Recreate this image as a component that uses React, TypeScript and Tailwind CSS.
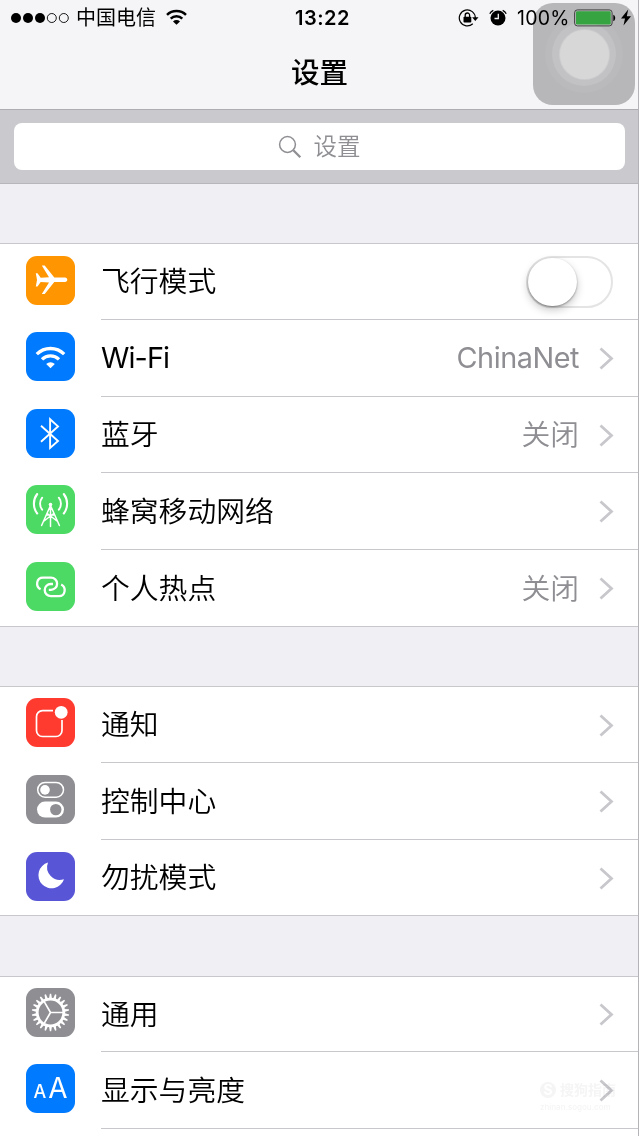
import type { ReactNode } from "react";

const cjk = "font-['Inter','Noto_Sans_CJK_SC',sans-serif]";

function Tile({ color, children }: { color: string; children: ReactNode }) {
  return (
    <div className={`h-[49px] w-[49px] shrink-0 overflow-hidden rounded-[11px] ${color}`}>
      <svg viewBox="0 0 49 49" className="block h-full w-full" fill="none">
        {children}
      </svg>
    </div>
  );
}

function Airplane() {
  return (
    <Tile color="bg-[#ff9500]">
      <path
        fill="#fff"
        d="M9.800 17.200h1.700l3.200 4.600 8.300-.6L15.800 9.600h2.900l9.600 12h10.700c1.500.1 2.300 1.200 2.300 2.200s-.8 2.100-2.300 2.200H28.300l-9.600 12h-2.900L23 26.500l-8.300-.6-3.200 4.600H9.800l1.200-6.600z"
      />
    </Tile>
  );
}

function Wifi() {
  return (
    <Tile color="bg-[#007aff]">
      <g stroke="#fff" strokeWidth="3.300">
        <path d="M10.800 22.200a19.300 19.300 0 0 1 27.400 0" />
        <path d="M16 27.400a12 12 0 0 1 17 0" />
      </g>
      <path fill="#fff" d="M24.500 36.300l-4.300-4.300a6.100 6.100 0 0 1 8.600 0z" />
    </Tile>
  );
}

function Bluetooth() {
  return (
    <Tile color="bg-[#007aff]">
      <path d="M15 16.800l17 15.200-7.900 7V10.200l7.900 7.200L15 32.800" stroke="#fff" strokeWidth="1.900" />
    </Tile>
  );
}

function Cellular() {
  return (
    <Tile color="bg-[#4cd964]">
      <g stroke="#fff" strokeWidth="1.500" strokeLinecap="round">
        <path d="M24.500 20.500L15.600 40.500M24.500 20.500l8.900 20M24.500 20v21.500M21.300 28.500l10.300 8M27.700 28.500l-10.300 8M20.500 30h8" />
        <path strokeWidth="1.900" d="M16.200 12.700a9.500 9.500 0 0 0 0 12M32.800 12.700a9.500 9.500 0 0 1 0 12" />
        <path strokeWidth="2.100" d="M11.200 9a16 16 0 0 0 0 19.500M37.800 9a16 16 0 0 1 0 19.500" />
      </g>
      <circle cx="24.500" cy="19.500" r="1.800" fill="#fff" />
    </Tile>
  );
}

function Hotspot() {
  return (
    <Tile color="bg-[#4cd964]">
      <g stroke="#fff" strokeWidth="2.300">
        <path d="M14.600 27.300C9.300 24.600 10.100 15.600 17 15.600H25a6.100 6.100 0 0 1 0 12.200H22.800" />
        <path d="M35.200 22.500C40.500 25.200 39.700 34.200 32.800 34.200H24.800a6.100 6.100 0 0 1 0-12.200h2.200" />
      </g>
    </Tile>
  );
}

function Notifications() {
  return (
    <Tile color="bg-[#ff3b30]">
      <path
        d="M27 12.700H16.500a6 6 0 0 0-6 6V32.500a6 6 0 0 0 6 6H30a6 6 0 0 0 6-6V22"
        stroke="#fff"
        strokeWidth="1.700"
      />
      <circle cx="35.200" cy="14.300" r="6.400" fill="#fff" />
    </Tile>
  );
}

function ControlCenter() {
  return (
    <Tile color="bg-[#8e8e93]">
      <rect x="11.700" y="7.500" width="25.800" height="14.700" rx="7.350" stroke="#fff" strokeWidth="1.500" />
      <circle cx="19" cy="14.900" r="4.800" fill="#fff" />
      <rect x="11" y="26.600" width="27" height="16" rx="8" fill="#fff" />
      <circle cx="29.800" cy="34.600" r="5.700" fill="#8e8e93" />
    </Tile>
  );
}

function Moon() {
  return (
    <Tile color="bg-[#5856d6]">
      <path fill="#fff" d="M22 10.600A13.100 13.100 0 1 0 38 27.200 12.700 12.700 0 0 1 22 10.600z" />
    </Tile>
  );
}

const teeth = Array.from({ length: 22 }, (_, i) => (i * 360) / 22);

function Gear() {
  return (
    <Tile color="bg-[#8e8e93]">
      <circle cx="24.500" cy="24.500" r="13.300" stroke="#fff" strokeWidth="2.800" />
      {teeth.map((a) => (
        <path key={a} d="M23 10.800l.8-5h1.400l.8 5z" fill="#fff" transform={`rotate(${a} 24.5 24.5)`} />
      ))}
      <path d="M24.500 24.500H37M24.500 24.500l-6.300-10.900M24.500 24.500l-6.300 10.900" stroke="#fff" strokeWidth="1.700" />
    </Tile>
  );
}

function Display() {
  return (
    <div className="flex h-[49px] w-[49px] shrink-0 items-baseline justify-center gap-[2px] rounded-[11px] bg-[#007aff] font-['Inter',sans-serif] text-white">
      <span className="text-[18px] leading-[49px] font-medium">A</span>
      <span className="text-[28px] leading-[49px]">A</span>
    </div>
  );
}

function Chevron() {
  return (
    <svg className="h-[24px] w-[15px] shrink-0" viewBox="0 0 15 24" fill="none">
      <path d="M1.500 2.500l11 10-11 10" stroke="#c7c7cc" strokeWidth="2.800" />
    </svg>
  );
}

function Toggle() {
  return (
    <div className="mt-px mr-px flex h-[52px] w-[87px] rounded-full border-[2px] border-[#e4e4e4] bg-white">
      <div className="h-[48px] w-[49px] rounded-full bg-white shadow-[0_4px_9px_rgba(0,0,0,0.22),0_1px_2px_rgba(0,0,0,0.35)]" />
    </div>
  );
}

interface Item {
  label: string;
  icon: ReactNode;
  height: string;
  value?: string;
  toggle?: boolean;
  latin?: boolean;
  raised?: boolean;
}

function Row({ item, last }: { item: Item; last: boolean }) {
  return (
    <div className={`flex pl-[26px] ${item.height}`}>
      <div className={item.raised ? "pt-[11px]" : "pt-[12px]"}>{item.icon}</div>
      <div
        className={`ml-[26px] flex flex-1 items-center pr-[25px] text-[28.800px] leading-[40px] ${
          last ? "" : "border-b border-[#c8c7cc]"
        }`}
      >
        <span
          className={`flex-1 text-black ${item.latin ? "font-[380] tracking-[-0.900px]" : "pt-px font-[350]"}`}
        >
          {item.label}
        </span>
        {item.toggle && <Toggle />}
        {item.value && (
          <span
            className={`text-[#8e8e93] ${
              item.latin ? "mr-[20px] font-[380] tracking-[-0.450px]" : "mr-[20px] pt-px font-[350]"
            }`}
          >
            {item.value}
          </span>
        )}
        {!item.toggle && <Chevron />}
      </div>
    </div>
  );
}

function Group({ items, open = false }: { items: Item[]; open?: boolean }) {
  return (
    <section className="border-y border-[#c8c7cc] bg-white">
      {items.map((item, i) => (
        <Row key={item.label} item={item} last={!open && i === items.length - 1} />
      ))}
      {open && <div className="h-[77px]" />}
    </section>
  );
}

const connectivity: Item[] = [
  { label: "飞行模式", icon: <Airplane />, height: "h-[76px]", toggle: true },
  { label: "Wi-Fi", icon: <Wifi />, height: "h-[77px]", value: "ChinaNet", latin: true },
  { label: "蓝牙", icon: <Bluetooth />, height: "h-[76px]", value: "关闭" },
  { label: "蜂窝移动网络", icon: <Cellular />, height: "h-[77px]" },
  { label: "个人热点", icon: <Hotspot />, height: "h-[76px]", value: "关闭" },
];

const alerts: Item[] = [
  { label: "通知", icon: <Notifications />, height: "h-[76px]", raised: true },
  { label: "控制中心", icon: <ControlCenter />, height: "h-[77px]" },
  { label: "勿扰模式", icon: <Moon />, height: "h-[75px]" },
];

const general: Item[] = [
  { label: "通用", icon: <Gear />, height: "h-[75px]", raised: true },
  { label: "显示与亮度", icon: <Display />, height: "h-[77px]" },
];

function StatusBar() {
  return (
    <div className="relative flex h-[35px] items-center justify-between pr-[8px] pl-[11px] text-black">
      <div className="flex items-center">
        <svg className="h-[12px] w-[58px]" viewBox="0 0 58 12" fill="none">
          <circle cx="5" cy="6" r="5" fill="#000" />
          <circle cx="17" cy="6" r="5" fill="#000" />
          <circle cx="29" cy="6" r="5" fill="#000" />
          <circle cx="40.800" cy="6" r="4.500" stroke="#000" strokeWidth=".9" />
          <circle cx="52.800" cy="6" r="4.500" stroke="#000" strokeWidth=".9" />
        </svg>
        <span className="ml-[7px] text-[20px] leading-[30px]">中国电信</span>
        <svg className="-mt-[2px] ml-[10px] h-[16px] w-[21px]" viewBox="0 0 21 16" fill="none">
          <g stroke="#000" strokeWidth="2.500">
            <path d="M1 5.800a13.700 13.700 0 0 1 19 0" />
            <path d="M4.700 9.700a8.300 8.300 0 0 1 11.600 0" />
          </g>
          <path fill="#000" d="M10.500 15.800L7 12.400a5 5 0 0 1 7 0z" />
        </svg>
      </div>
      <div className="absolute top-[3px] left-[295px] text-[20px] leading-[30px] font-semibold tracking-[0.500px]">
        13:22
      </div>
      <div className="flex items-center">
        <svg className="h-[20px] w-[21px]" viewBox="0 0 21 20" fill="none">
          <path d="M14.800 15.700a8 8 0 1 1 2.500-5.700" stroke="#000" strokeWidth="1.200" />
          <path d="M14.100 9.300h6.400l-3.200 3.600z" fill="#000" />
          <rect x="5.500" y="8.800" width="7.800" height="5.800" rx=".8" fill="#000" />
          <path d="M7.200 9V7.200a2.200 2.200 0 0 1 4.400 0V9" stroke="#000" strokeWidth="1.300" />
        </svg>
        <svg className="ml-[10px] h-[18px] w-[18px]" viewBox="0 0 18 18" fill="none">
          <circle cx="9" cy="9" r="7.500" fill="#000" />
          <path d="M9.300 4.800v4.700H5.500" stroke="#f4f4f6" strokeWidth="1.300" />
          <path d="M.8 4.800A7 7 0 0 1 4.300 1.300M17.200 4.800a7 7 0 0 0-3.500-3.500" stroke="#000" strokeWidth="1.300" />
        </svg>
        <span className="ml-[10px] w-[52px] text-[19.500px] leading-[30px] font-[380] tracking-[0.200px] whitespace-nowrap">
          100%
        </span>
        <svg className="ml-[5px] h-[18px] w-[42px]" viewBox="0 0 42 18" fill="none">
          <rect x=".6" y=".9" width="37.500" height="16" rx="2.800" stroke="#333" strokeWidth=".9" />
          <rect x="2" y="2.300" width="34.700" height="13.200" rx="1.300" fill="#36a541" />
          <path d="M39.300 5.800c2.500.8 2.500 5.600 0 6.400z" fill="#000" />
        </svg>
        <svg className="ml-[5px] h-[17px] w-[10px]" viewBox="0 0 10 17">
          <path d="M7.200.5L0 9.600h4L2.500 16.500 10 7.200H5.800z" fill="#000" />
        </svg>
      </div>
    </div>
  );
}

function AssistiveTouch() {
  return (
    <div className="absolute top-[3px] left-[533px] flex h-[102px] w-[102px] items-center justify-center rounded-[20px] bg-[#b7b7b9]">
      <div className="flex h-[78px] w-[78px] items-center justify-center rounded-full bg-[#bababc]">
        <div className="flex h-[64px] w-[64px] items-center justify-center rounded-full bg-[#c2c2c4]">
          <div className="h-[49px] w-[49px] rounded-full bg-[#d7d7d8] shadow-[0_0_0_1px_#cdcdcf]" />
        </div>
      </div>
    </div>
  );
}

export default function App() {
  return (
    <main className={`relative h-[1136px] w-[639px] overflow-hidden bg-[#efeff4] ${cjk}`}>
      <header className="relative h-[110px] border-b border-[#aeaeb2] bg-[#f5f5f7]">
        <AssistiveTouch />
        <StatusBar />
        <h1 className="relative mt-[17px] text-center text-[28.500px] leading-[42px] font-medium text-black">设置</h1>
      </header>
      <div className="h-[74px] border-b border-[#b6b6bb] bg-[#c9c9ce] px-[14px] pt-[13px]">
        <div className="flex h-[47px] items-center justify-center rounded-[8px] bg-white pr-px text-[#8e8e93]">
          <svg className="h-[24px] w-[24px]" viewBox="0 0 24 24" fill="none" stroke="#8e8e93">
            <circle cx="9.500" cy="9.500" r="7.900" strokeWidth="1.500" />
            <path d="M15.300 15.300l7 7" strokeWidth="2.300" />
          </svg>
          <span className="ml-[12px] text-[23.500px] leading-[34px] font-[350]">设置</span>
        </div>
      </div>
      <div className="mt-[59px] flex flex-col">
        <Group items={connectivity} />
        <div className="h-[59px]" />
        <Group items={alerts} />
        <div className="h-[60px]" />
        <Group items={general} open />
      </div>
      <div className="absolute top-[1081px] left-[540px] w-[78px] text-[#f5f5f5] mix-blend-multiply">
        <div className="flex items-center gap-[4px]">
          <span className="flex h-[16px] w-[16px] items-center justify-center rounded-full bg-[#f5f5f5] text-[14px] leading-[16px] font-bold text-white">
            S
          </span>
          <span className="text-[14px] leading-[18px] font-bold whitespace-nowrap">搜狗指南</span>
        </div>
        <div className="mt-[2px] text-[8px] leading-[12px] font-medium whitespace-nowrap">zhinan.sogou.com</div>
      </div>
      <div className="absolute top-0 right-0 h-full w-px bg-[#b4b4b8]" />
    </main>
  );
}
